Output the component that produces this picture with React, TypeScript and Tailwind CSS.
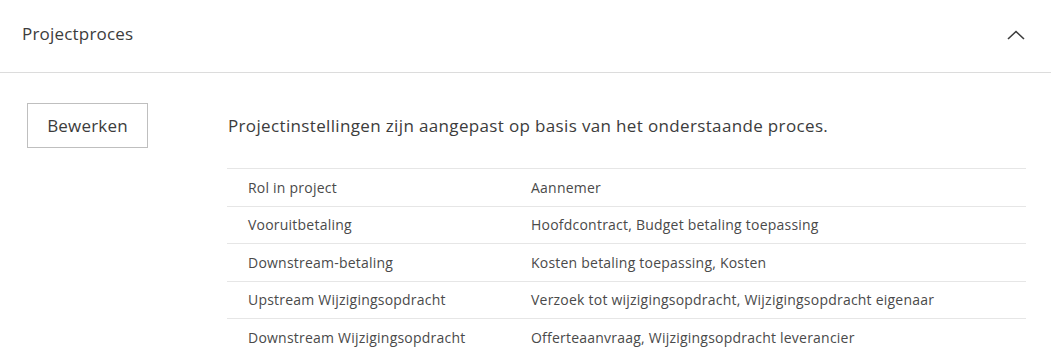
const rows: [string, string][] = [
  ["Rol in project", "Aannemer"],
  ["Vooruitbetaling", "Hoofdcontract, Budget betaling toepassing"],
  ["Downstream-betaling", "Kosten betaling toepassing, Kosten"],
  ["Upstream Wijzigingsopdracht", "Verzoek tot wijzigingsopdracht, Wijzigingsopdracht eigenaar"],
  ["Downstream Wijzigingsopdracht", "Offerteaanvraag, Wijzigingsopdracht leverancier"],
];

export default function App() {
  return (
    <div className="w-[1051px] h-[353px] overflow-hidden bg-white text-[#3c3c3c] font-['Open_Sans','Noto_Sans',sans-serif]">
      {/* header */}
      <div className="flex h-[73px] items-center justify-between border-b border-[#dcdcdc] pl-[22px] pr-[26px]">
        <span className="text-[17px] tracking-[0.2px] pb-[4px]">Projectproces</span>
        <svg width="18" height="10" viewBox="0 0 18 10" className="mb-[2px]" fill="none">
          <polyline points="1,9 9,1.5 17,9" stroke="#3c3c3c" strokeWidth="1.6" />
        </svg>
      </div>

      {/* body */}
      <div className="flex pt-[30px] pl-[27px] pr-[25px]">
        <div className="w-[200px] shrink-0">
          <button
            type="button"
            className="h-[45px] w-[121px] border border-[#bfbfbf] bg-white text-[17px] tracking-[0.2px] text-[#3c3c3c]"
          >
            Bewerken
          </button>
        </div>
        <div className="flex-1">
          <p className="pt-[10px] pl-px text-[17px] tracking-[0.35px] leading-[26px]">
            Projectinstellingen zijn aangepast op basis van het onderstaande proces.
          </p>
          <div className="mt-[29px] border-t border-[#e6e6e6] text-[14px] tracking-[0.22px] text-[#4a4a4a]">
            {rows.map(([k, v]) => (
              <div key={k} className="grid h-[37.5px] grid-cols-[283px_1fr] items-center border-b border-[#e6e6e6] pl-[21px]">
                <span>{k}</span>
                <span>{v}</span>
              </div>
            ))}
          </div>
        </div>
      </div>
    </div>
  );
}
